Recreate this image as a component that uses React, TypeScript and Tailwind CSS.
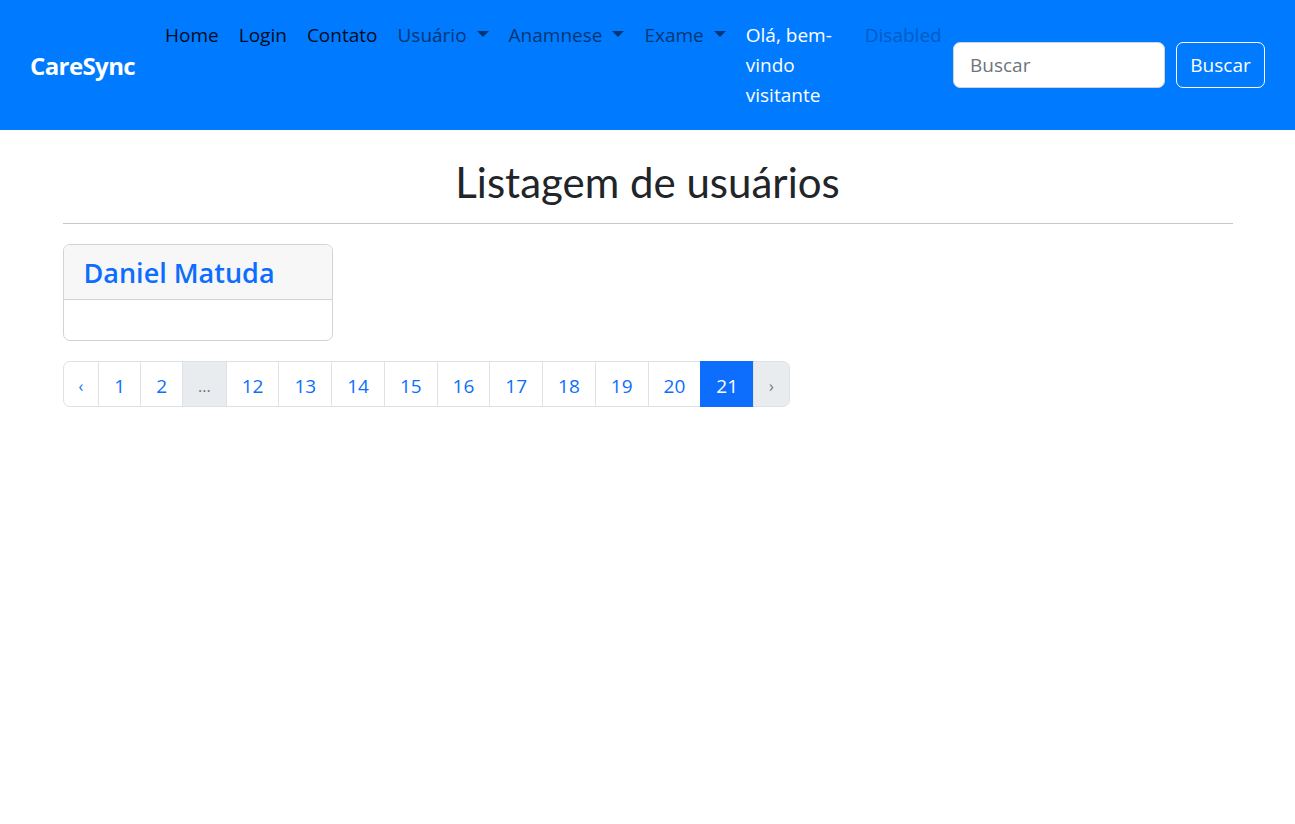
import React from 'react';

const navLinks = ['Home', 'Login', 'Contato'];

const dropdowns = ['Usuário', 'Anamnese', 'Exame'];

const pages = ['1', '2', '...', '12', '13', '14', '15', '16', '17', '18', '19', '20', '21'];

function Caret() {
  return (
    <span className="ml-[10px] inline-block align-[5px] border-t-[6px] border-x-[6px] border-x-transparent border-t-current" />
  );
}

export default function App() {
  return (
    <div className="min-h-screen bg-white font-['Open_Sans','Noto_Sans',sans-serif] text-[19px] leading-[30px] text-[#212529]">
      {/* Navbar */}
      <nav className="flex items-center bg-[#007bff] px-[30px] py-[10px]">
        <a className="mr-[20px] shrink-0 text-[24px] font-bold leading-[37px] tracking-[-0.6px] text-white">CareSync</a>
        <ul className="flex">
          {navLinks.map((l) => (
            <li key={l} className="shrink-0 whitespace-nowrap px-[10px] py-[10px] text-[#000c19]">
              {l}
            </li>
          ))}
          {dropdowns.map((d) => (
            <li key={d} className="shrink-0 whitespace-nowrap px-[10px] py-[10px] text-[#003773]">
              {d}
              <Caret />
            </li>
          ))}
          <li className="flex w-[119px] shrink-0 flex-col whitespace-nowrap px-[10px] py-[10px] text-white">
            <span>Olá, bem-</span>
            <span>vindo</span>
            <span>visitante</span>
          </li>
          <li className="shrink-0 whitespace-nowrap px-[10px] py-[10px] text-[#005cbf]">Disabled</li>
        </ul>
        <form className="ml-auto flex shrink-0 items-center">
          <input
            placeholder="Buscar"
            className="h-[46px] w-[212px] rounded-[7px] border border-[#ced4da] bg-white px-[16px] text-[19px] text-[#212529] outline-none placeholder:text-[#6c757d]"
          />
          <button
            type="button"
            className="ml-[11px] h-[46px] w-[89px] rounded-[7px] border border-white text-white"
          >
            Buscar
          </button>
        </form>
      </nav>

      {/* Main */}
      <main className="mx-auto w-[1170px]">
        <h1 className="pt-[28px] text-center font-['Comic_Sans_MS','Lato',cursive] text-[42px] leading-[48px] text-[#212529]">
          Listagem de usuários
        </h1>
        <hr className="mt-[17px] mb-[20px] border-t border-[#c8c8c8]" />

        <div className="w-[270px] rounded-[7px] border border-[#d3d3d3]">
          <div className="rounded-t-[7px] border-b border-[#d3d3d3] bg-[#f7f7f7] px-[20px] py-[10px]">
            <h5 className="pt-[2px] text-[27px] font-semibold leading-[32px] text-[#0d6efd]">Daniel Matuda</h5>
          </div>
          <div className="h-[40px]" />
        </div>

        <ul className="mt-[20px] flex">
          <li className="flex h-[46px] items-center rounded-l-[7px] border border-[#dee2e6] px-[15px] pt-[3px] text-[16px] text-[#0d6efd]">
            ‹
          </li>
          {pages.map((p) => {
            if (p === '...')
              return (
                <li key={p} className="-ml-px flex h-[46px] items-center border border-[#dee2e6] bg-[#e9ecef] px-[15px] pt-[3px] text-[16px] text-[#6c757d]">
                  ...
                </li>
              );
            if (p === '21')
              return (
                <li key={p} className="-ml-px flex h-[46px] items-center border border-[#0d6efd] bg-[#0d6efd] px-[15px] pt-[3px] text-white">
                  {p}
                </li>
              );
            return (
              <li key={p} className="-ml-px flex h-[46px] items-center border border-[#dee2e6] px-[15px] pt-[3px] text-[#0d6efd]">
                {p}
              </li>
            );
          })}
          <li className="-ml-px flex h-[46px] items-center rounded-r-[7px] border border-[#dee2e6] bg-[#e9ecef] px-[15px] pt-[3px] text-[16px] text-[#6c757d]">
            ›
          </li>
        </ul>
      </main>
    </div>
  );
}
